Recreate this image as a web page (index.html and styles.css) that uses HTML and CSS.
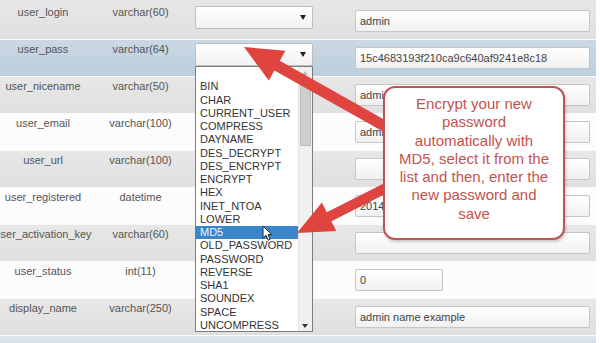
FILE: index.html
```html
<!DOCTYPE html>
<html>
<head>
<meta charset="utf-8">
<link rel="stylesheet" href="styles.css">
</head>
<body>
<div class="page">
  <div class="table">
    <div class="row alt first">
      <div class="name">user_login</div><div class="type">varchar(60)</div>
      <div class="fn"><div class="sel"></div></div>
      <div class="field"><div class="inp">admin</div></div>
    </div>
    <div class="row hover">
      <div class="name">user_pass</div><div class="type">varchar(64)</div>
      <div class="fn"><div class="sel"></div></div>
      <div class="field"><div class="inp">15c4683193f210ca9c640af9241e8c18</div></div>
    </div>
    <div class="row alt">
      <div class="name">user_nicename</div><div class="type">varchar(50)</div>
      <div class="fn"><div class="sel"></div></div>
      <div class="field"><div class="inp">admin</div></div>
    </div>
    <div class="row">
      <div class="name">user_email</div><div class="type">varchar(100)</div>
      <div class="fn"><div class="sel"></div></div>
      <div class="field"><div class="inp">admin@example.com</div></div>
    </div>
    <div class="row alt">
      <div class="name">user_url</div><div class="type">varchar(100)</div>
      <div class="fn"><div class="sel"></div></div>
      <div class="field"><div class="inp"></div></div>
    </div>
    <div class="row">
      <div class="name">user_registered</div><div class="type">datetime</div>
      <div class="fn"><div class="sel"></div></div>
      <div class="field"><div class="inp">2014-01-01 00:00:00</div></div>
    </div>
    <div class="row alt">
      <div class="name">user_activation_key</div><div class="type">varchar(60)</div>
      <div class="fn"><div class="sel"></div></div>
      <div class="field"><div class="inp"></div></div>
    </div>
    <div class="row">
      <div class="name">user_status</div><div class="type">int(11)</div>
      <div class="fn"><div class="sel"></div></div>
      <div class="field"><div class="inp short">0</div></div>
    </div>
    <div class="row alt">
      <div class="name">display_name</div><div class="type">varchar(250)</div>
      <div class="fn"><div class="sel"></div></div>
      <div class="field"><div class="inp">admin name example</div></div>
    </div>
  </div>
  <div class="foot"></div>

  <div class="dd">
    <div class="opts">
      <div class="opt">&nbsp;</div>
      <div class="opt">BIN</div>
      <div class="opt">CHAR</div>
      <div class="opt">CURRENT_USER</div>
      <div class="opt">COMPRESS</div>
      <div class="opt">DAYNAME</div>
      <div class="opt">DES_DECRYPT</div>
      <div class="opt">DES_ENCRYPT</div>
      <div class="opt">ENCRYPT</div>
      <div class="opt">HEX</div>
      <div class="opt">INET_NTOA</div>
      <div class="opt">LOWER</div>
      <div class="opt active">MD5</div>
      <div class="opt">OLD_PASSWORD</div>
      <div class="opt">PASSWORD</div>
      <div class="opt">REVERSE</div>
      <div class="opt">SHA1</div>
      <div class="opt">SOUNDEX</div>
      <div class="opt">SPACE</div>
      <div class="opt">UNCOMPRESS</div>
    </div>
    <div class="sb">
      <div class="sb-btn up"></div>
      <div class="thumb"></div>
      <div class="track"></div>
      <div class="sb-btn down"></div>
    </div>
  </div>

  <svg class="arrows" width="600" height="343" viewBox="0 0 600 343">
    <polygon fill="#e0443f" points="244,47 285.4,50.8 279.8,60.8 390.7,123.2 385.3,132.8 274.4,70.4 268.8,80.4"/>
    <polygon fill="#e0443f" points="297,233 321.9,202.5 326.8,212.3 387.7,181.5 392.3,190.5 331.4,221.3 336.3,231.1"/>
  </svg>

  <svg class="cursor" width="12" height="17" viewBox="0 0 12 17">
    <path d="M1 1 L1 13 L4 10.3 L6.2 15.2 L8.2 14.3 L6 9.6 L9.8 9.6 Z" fill="#fff" stroke="#222" stroke-width="1" stroke-linejoin="round"/>
  </svg>

  <div class="tip">Encrypt your new<br>password<br>automatically with<br>MD5, select it from the<br>list and then, enter the<br>new password and<br>save</div>
</div>
</body>
</html>
```
FILE: styles.css
```css
body {
  margin: 0;
  background: #fff;
  font-family: "Liberation Sans", Arial, sans-serif;
}
.page {
  position: relative;
  width: 600px;
  height: 343px;
  overflow: hidden;
}
.table {
  width: 596px;
}
.row {
  display: grid;
  grid-template-columns: 86px 109px 118px 1fr;
  height: 36px;
  border-bottom: 1px solid #fafafa;
  background: #fcfcfc;
}
.row.alt {
  background: linear-gradient(#e7e7e7, #e0e0e0);
}
.row.hover {
  background: linear-gradient(#cad8e3, #bccfdd);
}
.row.first {
  padding-top: 3px;
}
.name, .type {
  display: flex;
  justify-content: center;
  white-space: nowrap;
  font-size: 11px;
  line-height: 14px;
  padding-top: 2px;
  color: #555;
}
.fn {
  padding-top: 3px;
}
.sel {
  position: relative;
  height: 23px;
  box-sizing: border-box;
  border: 1px solid #bdbdbd;
  border-radius: 2px;
  background: linear-gradient(#ffffff, #f2f2f2);
}
.sel::after {
  content: "";
  position: absolute;
  right: 6px;
  top: 8px;
  border-left: 3px solid transparent;
  border-right: 3px solid transparent;
  border-top: 5px solid #222;
}
.field {
  padding: 7px 6px 0 42px;
}
.inp {
  height: 22px;
  box-sizing: border-box;
  border: 1px solid #c6c6c6;
  border-radius: 2px;
  background: linear-gradient(#ffffff, #f0f0f0);
  font-size: 11px;
  line-height: 20px;
  padding-left: 4px;
  color: #444;
  white-space: nowrap;
  overflow: hidden;
}
.inp.short {
  width: 88px;
}
.foot {
  width: 596px;
  height: 7px;
  background: linear-gradient(#dfe6ec, #d6dfe7);
}
.dd {
  position: absolute;
  left: 195px;
  top: 66px;
  width: 118px;
  height: 266px;
  box-sizing: border-box;
  border: 1px solid #7d7d7d;
  background: #fff;
  display: flex;
}
.opts {
  flex: 1;
  font-size: 11px;
  line-height: 13.25px;
  color: #333;
}
.opt {
  height: 13.25px;
  padding-left: 4px;
  white-space: nowrap;
}
.opt.active {
  background: #3b86cb;
  color: #eef5fb;
}
.sb {
  width: 13px;
  background: #f0f0f0;
  border-left: 1px solid #e2e2e2;
  display: flex;
  flex-direction: column;
}
.sb-btn {
  position: relative;
  height: 11px;
}
.sb-btn.up::after {
  content: "";
  position: absolute;
  left: 3px;
  top: 4px;
  border-left: 3px solid transparent;
  border-right: 3px solid transparent;
  border-bottom: 4px solid #bdbdbd;
}
.sb-btn.down::after {
  content: "";
  position: absolute;
  left: 3px;
  top: 4px;
  border-left: 3px solid transparent;
  border-right: 3px solid transparent;
  border-top: 4px solid #333;
}
.thumb {
  height: 68px;
  margin: 0 1px;
  box-sizing: border-box;
  border: 1px solid #b9b9b9;
  background: #cfcfcf;
}
.track {
  flex: 1;
}
.arrows {
  position: absolute;
  left: 0;
  top: 0;
}
.cursor {
  position: absolute;
  left: 262px;
  top: 225px;
}
.tip {
  position: absolute;
  left: 383px;
  top: 86px;
  width: 182px;
  height: 154px;
  box-sizing: border-box;
  border: 2px solid #bf5551;
  border-radius: 12px;
  background: #fff;
  box-shadow: 1px 2px 3px rgba(0, 0, 0, 0.2);
  color: #c4524e;
  font-size: 15px;
  line-height: 18.3px;
  text-align: center;
  padding-top: 7px;
}
```
